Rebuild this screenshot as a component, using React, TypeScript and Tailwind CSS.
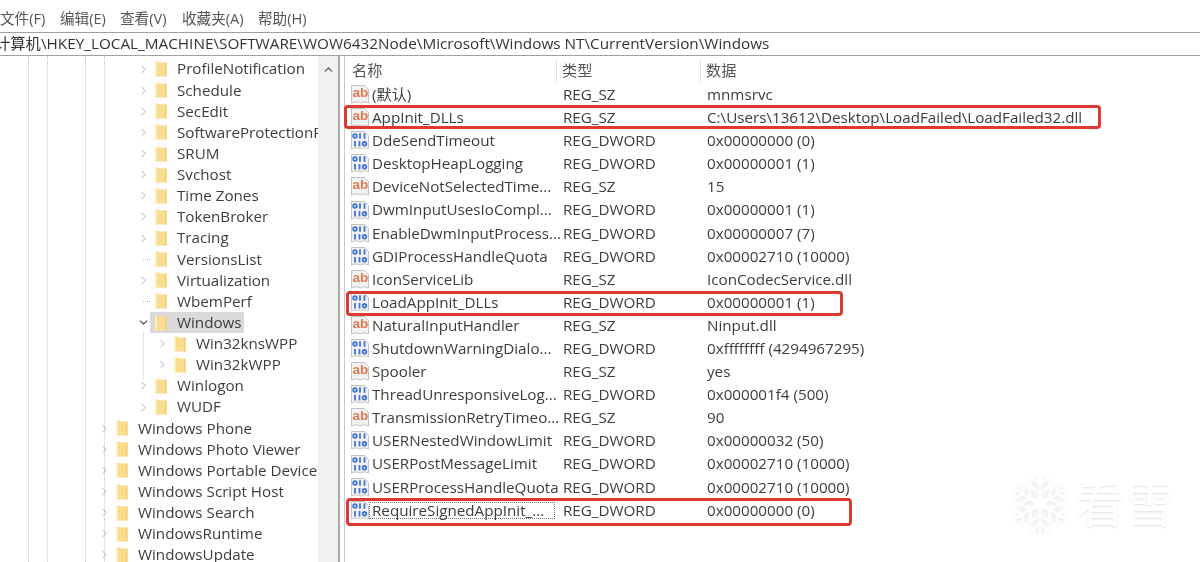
import { ChevronDown, ChevronRight, ChevronUp } from 'lucide-react';

type TreeItem = { label: string; depth: 0 | 1 | 2; open?: boolean; selected?: boolean; leaf?: boolean };
type RegRow = { name: string; type: 'REG_SZ' | 'REG_DWORD'; data: string; focused?: boolean };

const treeItems: TreeItem[] = [
  { label: 'ProfileNotification', depth: 1 },
  { label: 'Schedule', depth: 1 },
  { label: 'SecEdit', depth: 1 },
  { label: 'SoftwareProtectionPlatform', depth: 1 },
  { label: 'SRUM', depth: 1 },
  { label: 'Svchost', depth: 1 },
  { label: 'Time Zones', depth: 1 },
  { label: 'TokenBroker', depth: 1 },
  { label: 'Tracing', depth: 1 },
  { label: 'VersionsList', depth: 1, leaf: true },
  { label: 'Virtualization', depth: 1 },
  { label: 'WbemPerf', depth: 1, leaf: true },
  { label: 'Windows', depth: 1, open: true, selected: true },
  { label: 'Win32knsWPP', depth: 2 },
  { label: 'Win32kWPP', depth: 2 },
  { label: 'Winlogon', depth: 1 },
  { label: 'WUDF', depth: 1 },
  { label: 'Windows Phone', depth: 0 },
  { label: 'Windows Photo Viewer', depth: 0 },
  { label: 'Windows Portable Device', depth: 0 },
  { label: 'Windows Script Host', depth: 0 },
  { label: 'Windows Search', depth: 0 },
  { label: 'WindowsRuntime', depth: 0 },
  { label: 'WindowsUpdate', depth: 0 },
];

const rows: RegRow[] = [
  { name: '(默认)', type: 'REG_SZ', data: 'mnmsrvc' },
  { name: 'AppInit_DLLs', type: 'REG_SZ', data: 'C:\\Users\\13612\\Desktop\\LoadFailed\\LoadFailed32.dll' },
  { name: 'DdeSendTimeout', type: 'REG_DWORD', data: '0x00000000 (0)' },
  { name: 'DesktopHeapLogging', type: 'REG_DWORD', data: '0x00000001 (1)' },
  { name: 'DeviceNotSelectedTime...', type: 'REG_SZ', data: '15' },
  { name: 'DwmInputUsesIoCompl...', type: 'REG_DWORD', data: '0x00000001 (1)' },
  { name: 'EnableDwmInputProcess...', type: 'REG_DWORD', data: '0x00000007 (7)' },
  { name: 'GDIProcessHandleQuota', type: 'REG_DWORD', data: '0x00002710 (10000)' },
  { name: 'IconServiceLib', type: 'REG_SZ', data: 'IconCodecService.dll' },
  { name: 'LoadAppInit_DLLs', type: 'REG_DWORD', data: '0x00000001 (1)' },
  { name: 'NaturalInputHandler', type: 'REG_SZ', data: 'Ninput.dll' },
  { name: 'ShutdownWarningDialo...', type: 'REG_DWORD', data: '0xffffffff (4294967295)' },
  { name: 'Spooler', type: 'REG_SZ', data: 'yes' },
  { name: 'ThreadUnresponsiveLog...', type: 'REG_DWORD', data: '0x000001f4 (500)' },
  { name: 'TransmissionRetryTimeo...', type: 'REG_SZ', data: '90' },
  { name: 'USERNestedWindowLimit', type: 'REG_DWORD', data: '0x00000032 (50)' },
  { name: 'USERPostMessageLimit', type: 'REG_DWORD', data: '0x00002710 (10000)' },
  { name: 'USERProcessHandleQuota', type: 'REG_DWORD', data: '0x00002710 (10000)' },
  { name: 'RequireSignedAppInit_...', type: 'REG_DWORD', data: '0x00000000 (0)', focused: true },
];

const menus = [
  { label: '文件(F)', cls: 'w-[60px]' },
  { label: '编辑(E)', cls: 'w-[60px]' },
  { label: '查看(V)', cls: 'w-[62px]' },
  { label: '收藏夹(A)', cls: 'w-[76px]' },
  { label: '帮助(H)', cls: 'w-[60px]' },
];

function Folder() {
  return (
    <svg width="13" height="16" viewBox="0 0 13 16" className="shrink-0">
      <path d="M1 0.5h3.5l1 1H12.5V15.5H1z" fill="#f9dc8f" />
      <path d="M1 0.5h2V15.5H1z" fill="#fdeebd" />
      <path d="M11 1.5h1.5V15.5H11z" fill="#f4cf70" />
    </svg>
  );
}

function RegIcon({ type }: { type: RegRow['type'] }) {
  return (
    <svg width="20" height="21" viewBox="0 0 20 21" className="shrink-0">
      <path d="M1.5 1.5h13l4 4v13.5c-3-1.5-5-1.5-8 0-3-1.5-6-1.5-9 0z" fill="#f2f2f2" stroke="#c2c2c2" />
      {type === 'REG_SZ' ? (
        <text x="2.5" y="13" fontSize="13.5" fontWeight="700" fill="#e07a55" fontFamily="Liberation Sans, sans-serif">
          ab
        </text>
      ) : (
        <g fill="none" stroke="#3f74d8" strokeWidth="1.8">
          <circle cx="5" cy="6" r="1.8" />
          <path d="M10 3.2v5.6M14.5 3.2v5.6M5 11v5.6M9.5 11v5.6" />
          <circle cx="14.5" cy="13.8" r="1.8" />
        </g>
      )}
    </svg>
  );
}

function TreeRow({ item }: { item: TreeItem }) {
  const indent = item.depth === 0 ? 'pl-[98px]' : item.depth === 1 ? 'pl-[137px]' : 'pl-[156px]';
  const Chevron = item.open ? ChevronDown : ChevronRight;
  return (
    <div className={`flex h-[21.13px] items-center ${indent}`}>
      {item.leaf ? (
        <div className="flex h-[13px] w-[13px] shrink-0 items-center justify-end">
          <div className="w-[7px] border-t border-dotted border-[#bdbdbd]" />
        </div>
      ) : (
        <Chevron size={13} strokeWidth={item.open ? 2 : 1.6} className={`shrink-0 ${item.open ? 'text-[#444]' : 'text-[#a6a6a6]'}`} />
      )}
      <div className={`flex h-[21px] items-center pl-[4px] ${item.selected ? 'bg-[#d9d9d9] pr-[2px]' : ''}`}>
        <Folder />
        <span className="ml-[10px] whitespace-nowrap">{item.label}</span>
      </div>
    </div>
  );
}

function ValueRow({ row }: { row: RegRow }) {
  return (
    <div className="flex h-[23.1px] items-center">
      <div className="flex w-[212px] shrink-0 items-center pl-[5px]">
        <RegIcon type={row.type} />
        {row.focused ? (
          <span className="-ml-[1px] w-[186px] border border-dotted border-[#777] pr-[5px] pl-[2px] whitespace-nowrap">{row.name}</span>
        ) : (
          <span className="ml-[2px] whitespace-nowrap">{row.name}</span>
        )}
      </div>
      <div className="w-[144px] shrink-0 pl-[6px] whitespace-nowrap">{row.type}</div>
      <div className="pl-[6px] whitespace-nowrap">{row.data}</div>
    </div>
  );
}

function Snowflake() {
  const arm = 'M30 30V3M30 10l-7-5M30 10l7-5M30 19l-9-6M30 19l9-6';
  return (
    <svg width="60" height="64" viewBox="0 0 60 60" fill="none" stroke="#ffffff" strokeWidth="3" strokeLinecap="round" className="drop-shadow-[0_1px_2px_rgba(0,0,0,0.1)]">
      {[0, 60, 120, 180, 240, 300].map((a) => (
        <path key={a} d={arm} transform={`rotate(${a} 30 30)`} />
      ))}
      <path d="M30 24l5 3v6l-5 3-5-3v-6z" />
    </svg>
  );
}

export default function App() {
  return (
    <div className="relative flex h-[562px] w-[1200px] flex-col overflow-hidden bg-white font-['Open_Sans','Noto_Sans_CJK_SC',sans-serif] text-[15.2px] leading-none text-[#3d3d3d] blur-[0.5px]">
      <div className="flex h-[32px] shrink-0 items-start pt-[11px] text-[14.6px] text-[#555]">
        {menus.map((m) => (
          <span key={m.label} className={`${m.cls} shrink-0 whitespace-nowrap`}>
            {m.label}
          </span>
        ))}
      </div>

      <div className="flex h-[24px] shrink-0 items-center overflow-hidden border-y border-[#a0a0a0] whitespace-nowrap">
        <span className="-ml-[5px] text-[15.3px] text-[#333]">计算机\HKEY_LOCAL_MACHINE\SOFTWARE\WOW6432Node\Microsoft\Windows NT\CurrentVersion\Windows</span>
      </div>

      <div className="flex min-h-0 flex-1">
        <div className="relative w-[318px] shrink-0 overflow-hidden pt-[2.5px]">
          <div className="absolute inset-y-0 left-[28px] border-l border-dotted border-[#c4c4c4]" />
          <div className="absolute inset-y-0 left-[47px] border-l border-dotted border-[#c4c4c4]" />
          <div className="absolute inset-y-0 left-[85px] border-l border-dotted border-[#c4c4c4]" />
          <div className="absolute inset-y-0 left-[104px] border-l border-dotted border-[#c4c4c4]" />
          <div className="absolute left-[143px] top-[277px] h-[45px] border-l border-dotted border-[#c4c4c4]" />
          <div className="relative">
            {treeItems.map((item) => (
              <TreeRow key={item.label} item={item} />
            ))}
          </div>
        </div>

        <div className="flex w-[20px] shrink-0 justify-center bg-[#f1f1f1] pt-[7px]">
          <ChevronUp size={13} strokeWidth={2.4} className="text-[#555]" />
        </div>
        <div className="w-[2px] shrink-0 bg-[#a8a8a8]" />
        <div className="w-[4px] shrink-0" />

        <div className="min-w-0 flex-1 border-l border-[#c9c9c9]">
          <div className="flex h-[27px] items-center pt-[3px] text-[#555]">
            <div className="flex h-full w-[212px] shrink-0 items-center border-r border-[#e4e4e4] pl-[7px]">名称</div>
            <div className="flex h-full w-[144px] shrink-0 items-center border-r border-[#e4e4e4] pl-[5px]">类型</div>
            <div className="pl-[5px]">数据</div>
          </div>
          {rows.map((row) => (
            <ValueRow key={row.name} row={row} />
          ))}
        </div>
      </div>

      {/* red marks drawn over the screenshot */}
      <div className="absolute left-[344px] top-[105px] h-[24px] w-[757px] rounded-[4px] border-[3px] border-[#dc3a30]" />
      <div className="absolute left-[346px] top-[291px] h-[25px] w-[497px] rounded-[4px] border-[3px] border-[#dc3a30]" />
      <div className="absolute left-[346px] top-[498px] h-[28px] w-[506px] rounded-[4px] border-[3px] border-[#dc3a30]" />

      <div className="absolute left-[1010px] top-[472px] flex items-center gap-[6px]">
        <Snowflake />
        <span className="whitespace-nowrap text-[48px] leading-none tracking-[2px] text-white [text-shadow:0_1px_2px_rgba(0,0,0,0.12)]">看雪</span>
      </div>
    </div>
  );
}
